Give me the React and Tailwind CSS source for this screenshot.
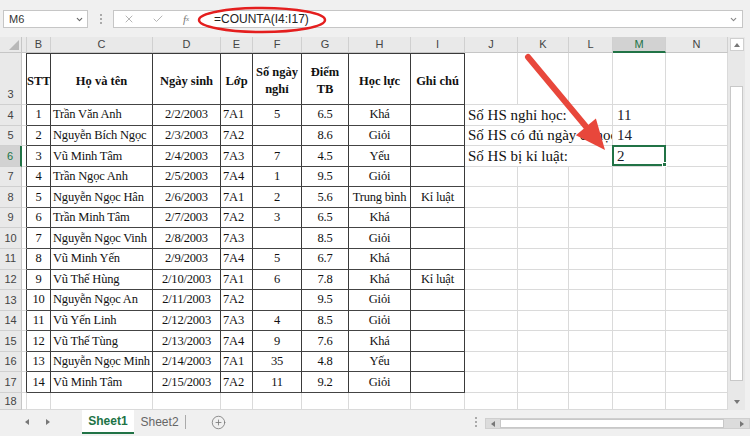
import { X, Check, CirclePlus, ChevronDown } from "lucide-react";
import clsx from "clsx";

const widths = [
  "w-[5px]", "w-[24px]", "w-[102px]", "w-[68px]", "w-[32px]", "w-[49px]", "w-[47px]",
  "w-[62px]", "w-[54px]", "w-[53px]", "w-[51px]", "w-[44px]", "w-[53px]", "w-[62px]",
];

const letters = ["A", "B", "C", "D", "E", "F", "G", "H", "I", "J", "K", "L", "M", "N"];

// B..I alignment
const aligns = [
  "", "justify-center", "justify-start", "justify-center", "justify-start",
  "justify-center", "justify-center", "justify-center", "justify-center",
];

const students = [
  ["1", "Trần Văn Anh", "2/2/2003", "7A1", "5", "6.5", "Khá", ""],
  ["2", "Nguyễn Bích Ngọc", "2/3/2003", "7A2", "", "8.6", "Giỏi", ""],
  ["3", "Vũ Minh Tâm", "2/4/2003", "7A3", "7", "4.5", "Yếu", ""],
  ["4", "Trần Ngọc Anh", "2/5/2003", "7A4", "1", "9.5", "Giỏi", ""],
  ["5", "Nguyễn Ngọc Hân", "2/6/2003", "7A1", "2", "5.6", "Trung bình", "Kỉ luật"],
  ["6", "Trần Minh Tâm", "2/7/2003", "7A2", "3", "6.5", "Khá", ""],
  ["7", "Nguyễn Ngọc Vinh", "2/8/2003", "7A3", "", "8.5", "Giỏi", ""],
  ["8", "Vũ Minh Yến", "2/9/2003", "7A4", "5", "6.7", "Khá", ""],
  ["9", "Vũ Thế Hùng", "2/10/2003", "7A1", "6", "7.8", "Khá", "Kỉ luật"],
  ["10", "Nguyễn Ngọc An", "2/11/2003", "7A2", "", "9.5", "Giỏi", ""],
  ["11", "Vũ  Yến Linh", "2/12/2003", "7A3", "4", "8.5", "Giỏi", ""],
  ["12", "Vũ Thế Tùng", "2/13/2003", "7A4", "9", "7.6", "Khá", ""],
  ["13", "Nguyễn Ngọc Minh", "2/14/2003", "7A1", "35", "4.8", "Yếu", ""],
  ["14", "Vũ Minh Tâm", "2/15/2003", "7A2", "11", "9.2", "Giỏi", ""],
];

const summary = {
  4: ["Số HS nghỉ học:", "11"],
  5: ["Số HS có đủ ngày đi học:", "14"],
  6: ["Số HS bị kỉ luật:", "2"],
};

const serif = "font-['Liberation_Serif','Times_New_Roman',serif]";

function RowHead({ n, active, className }) {
  return (
    <div
      className={clsx(
        "w-[22px] shrink-0 flex justify-center text-[11px] font-['Liberation_Sans',Arial,sans-serif] border-b border-b-[#d0d0d0]",
        active
          ? "bg-[#d2d2d2] text-[#217346] border-r-2 border-r-[#217346]"
          : "bg-[#e9e9e9] text-[#444] border-r border-r-[#c6c6c6]",
        className
      )}
    >
      {n}
    </div>
  );
}

function Cell({ i, row, children, className }) {
  const inTable = i >= 1 && i <= 8 && row >= 3 && row <= 17;
  const aEdge = i === 0 && row >= 3 && row <= 17;

  return (
    <div
      className={clsx(
        "shrink-0 flex items-center border-r border-b overflow-hidden whitespace-nowrap",
        widths[i],
        inTable || aEdge ? "border-r-[#3a3a3a]" : "border-r-[#dadada]",
        inTable ? "border-b-[#444]" : "border-b-[#dadada]",
        inTable && row === 3 && "border-t border-t-[#3a3a3a]",
        className
      )}
    >
      {children}
    </div>
  );
}

function TinyTri({ dir }) {
  const pts = {
    up: "1,6 4,2 7,6",
    down: "1,2 4,6 7,2",
    left: "6,1 2,4 6,7",
    right: "2,1 6,4 2,7",
  };
  return (
    <svg width="8" height="8" viewBox="0 0 8 8">
      <polygon points={pts[dir]} fill="#777" />
    </svg>
  );
}

function FormulaBar() {
  return (
    <div className="relative h-[37px] flex items-start pt-[10px] pl-[3px] pr-[7px] bg-[#f0f0f0]">
      <div className="w-[85px] h-[18px] bg-white border border-[#c6c6c6] flex items-center justify-between pl-[5px] pr-[3px] text-[11px] text-[#333] font-['Liberation_Sans',Arial,sans-serif]">
        <span>M6</span>
        <ChevronDown size={9} strokeWidth={3} className="text-[#666]" />
      </div>

      <div className="w-[25px] h-[18px] flex items-center justify-center">
        <div className="flex flex-col gap-[2px]">
          <span className="w-[2px] h-[2px] bg-[#aaa]" />
          <span className="w-[2px] h-[2px] bg-[#aaa]" />
          <span className="w-[2px] h-[2px] bg-[#aaa]" />
        </div>
      </div>

      <div className="flex-1 h-[18px] bg-white border border-[#c6c6c6] flex items-center pr-[4px]">
        <div className="w-[30px] flex justify-center">
          <X size={12} className="text-[#b5b5b5]" />
        </div>
        <div className="w-[28px] flex justify-center">
          <Check size={12} className="text-[#b5b5b5]" />
        </div>
        <div className="w-[28px] flex justify-center text-[11px] italic text-[#777] font-['Liberation_Serif',serif]">
          f<span className="text-[7px] mt-[3px]">x</span>
        </div>
        <div className="ml-[14px] text-[12px] text-[#222] font-['Liberation_Sans',Arial,sans-serif]">
          =COUNTA(I4:I17)
        </div>
        <div className="ml-auto">
          <ChevronDown size={9} strokeWidth={3} className="text-[#888]" />
        </div>
      </div>

      <svg className="absolute left-0 top-0" width="750" height="37">
        <ellipse cx="262" cy="20" rx="63" ry="12" fill="none" stroke="#e41e1e" strokeWidth="2.5" />
      </svg>
    </div>
  );
}

function ColumnHeaders() {
  return (
    <div className="flex h-[16px]">
      <div className="w-[22px] shrink-0 bg-[#e9e9e9] border-r border-b border-[#c6c6c6] flex items-end justify-end pr-[2px] pb-[2px]">
        <svg width="10" height="10" viewBox="0 0 10 10">
          <polygon points="10,0 10,10 0,10" fill="#b8b8b8" />
        </svg>
      </div>
      {letters.map((l, i) => (
        <div
          key={l}
          className={clsx(
            "shrink-0 flex items-center justify-center text-[11px] font-['Liberation_Sans',Arial,sans-serif] border-r border-r-[#d0d0d0] overflow-hidden",
            widths[i],
            l === "M"
              ? "bg-[#d2d2d2] text-[#217346] border-b-2 border-b-[#217346]"
              : "bg-[#e9e9e9] text-[#444] border-b border-b-[#c6c6c6]"
          )}
        >
          {l === "A" ? "" : l}
        </div>
      ))}
    </div>
  );
}

function HeaderRow() {
  const heads = ["STT", "Họ và tên", "Ngày sinh", "Lớp", "Số ngày\nnghỉ", "Điểm\nTB", "Học lực", "Ghi chú"];

  return (
    <div className="flex h-[52px]">
      <RowHead n="3" className="items-end pb-[2px]" />
      {letters.map((l, i) => (
        <Cell key={l} i={i} row={3} className={clsx(i === 1 ? "justify-start" : "justify-center", "pt-[4px]")}>
          {i >= 1 && i <= 8 && (
            <span className={clsx("text-[12.5px] font-bold text-[#111] leading-[17px] text-center whitespace-pre", serif)}>
              {heads[i - 1]}
            </span>
          )}
        </Cell>
      ))}
    </div>
  );
}

function DataRow({ row, data }) {
  const extra = summary[row];

  return (
    <div className="flex h-[20.57px]">
      <RowHead n={row} active={row === 6} className="items-center" />

      {letters.slice(0, 9).map((l, i) => (
        <Cell key={l} i={i} row={row} className={clsx(aligns[i], "px-[2px]")}>
          {i >= 1 && (
            <span className={clsx("text-[12.5px] tracking-[-0.2px] text-[#111]", serif)}>{data[i - 1]}</span>
          )}
        </Cell>
      ))}

      {extra ? (
        <div className="w-[148px] shrink-0 flex items-center border-r border-b border-[#dadada] overflow-hidden whitespace-nowrap pl-[3px]">
          <span className={clsx("text-[15px] text-[#111]", serif)}>{extra[0]}</span>
        </div>
      ) : (
        <>
          <Cell i={9} row={row} />
          <Cell i={10} row={row} />
          <Cell i={11} row={row} />
        </>
      )}

      <Cell i={12} row={row} className="relative pl-[4px] overflow-visible">
        {extra && (
          <span className={clsx("text-[15px] text-[#1a1a2a]", serif)}>{extra[1]}</span>
        )}
        {row === 6 && (
          <div className="absolute -left-[1px] -top-[1px] w-[54px] h-[21px] border-2 border-[#217346]">
            <div className="absolute -right-[3px] -bottom-[3px] w-[5px] h-[5px] bg-[#217346] border border-white" />
          </div>
        )}
      </Cell>
      <Cell i={13} row={row} />
    </div>
  );
}

function VerticalScroll() {
  return (
    <div className="w-[17px] shrink-0 bg-[#e8e8e8] flex flex-col items-center pt-[1px] pb-[2px]">
      <div className="w-[14px] h-[13px] bg-white border border-[#cfcfcf] flex items-center justify-center">
        <TinyTri dir="up" />
      </div>
      <div className="flex-1 w-full flex flex-col items-center">
        <div className="mt-[35px] w-[13px] h-[295px] bg-white border border-[#c8c8c8]" />
      </div>
      <div className="w-[14px] h-[13px] flex items-center justify-center">
        <TinyTri dir="down" />
      </div>
    </div>
  );
}

function TabBar() {
  return (
    <div className="h-[26px] flex items-start bg-[#f0f0f0] font-['Liberation_Sans',Arial,sans-serif]">
      <div className="w-[83px] h-[24px] flex items-center pl-[23px] gap-[13px]">
        <TinyTri dir="left" />
        <TinyTri dir="right" />
      </div>
      <div className="w-[53px] h-[24px] bg-white border-b-2 border-[#217346] flex items-center justify-center text-[12px] font-bold text-[#217346]">
        Sheet1
      </div>
      <div className="w-[52px] h-[24px] flex items-center justify-center text-[12px] text-[#666]">
        Sheet2
      </div>
      <div className="w-[1px] h-[14px] mt-[5px] bg-[#aaa]" />
      <div className="w-[66px] h-[24px] flex items-center justify-center">
        <CirclePlus size={15} strokeWidth={1.3} className="text-[#777]" />
      </div>
      <div className="w-[238px] h-[24px] flex items-center justify-end pr-[8px]">
        <div className="flex flex-col gap-[2px]">
          <span className="w-[2px] h-[2px] bg-[#aaa]" />
          <span className="w-[2px] h-[2px] bg-[#aaa]" />
          <span className="w-[2px] h-[2px] bg-[#aaa]" />
        </div>
      </div>
      <div className="w-[270px] h-[11px] mt-[8px] bg-[#dcdcdc] border border-[#cfcfcf] flex items-center">
        <div className="w-[14px] flex justify-center">
          <TinyTri dir="left" />
        </div>
        <div className="w-[224px] h-full bg-white border border-[#c8c8c8]" />
        <div className="ml-auto w-[14px] flex justify-center">
          <TinyTri dir="right" />
        </div>
      </div>
    </div>
  );
}

function App() {
  return (
    <div className="w-[750px] h-[436px] overflow-hidden bg-[#f0f0f0] flex flex-col">

      <FormulaBar />

      <div className="flex h-[373px]">

        <div className="relative w-[728px] shrink-0 bg-white flex flex-col">
          <ColumnHeaders />
          <HeaderRow />

          {students.map((s, k) => (
            <DataRow key={k} row={k + 4} data={s} />
          ))}

          <div className="flex h-[17px]">
            <RowHead n="18" className="items-center" />
            {letters.map((l, i) => (
              <Cell key={l} i={i} row={18} />
            ))}
          </div>

          {/* red arrow pointing to M6 */}
          <svg className="absolute left-0 top-0 pointer-events-none" width="728" height="373">
            <line x1="528" y1="20" x2="588" y2="92" stroke="#e8473b" strokeWidth="6" strokeLinecap="round" />
            <polygon points="605,113 575.9,98.2 595.9,81.6" fill="#e8473b" />
          </svg>
        </div>

        <VerticalScroll />

        <div className="w-[5px] shrink-0 bg-[#f0f0f0]" />
      </div>

      <TabBar />
    </div>
  );
}

export default App;
